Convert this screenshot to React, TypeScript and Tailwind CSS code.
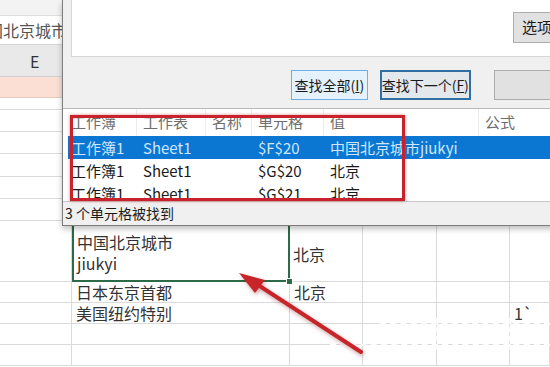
import React from 'react';

const cols = ['w-[72px]', 'w-[218px]', 'w-[73px]', 'w-[74px]', 'w-[73px]', 'flex-1'];

type Cells = (string | null)[];

const SheetRow: React.FC<{ h: string; cells?: Cells }> = ({ h, cells = [] }) => (
  <div className={`flex ${h} shrink-0`}>
    {cols.map((w, i) => (
      <div key={i} className={`${w} shrink-0 border-r border-b border-[#dadada] flex items-center pl-[4px] text-[16px] text-[#333] leading-[18px] overflow-hidden whitespace-nowrap`}>
        {cells[i]}
      </div>
    ))}
  </div>
);

const listCols = ['w-[69px] pl-[3px]', 'w-[69px] pl-[6px]', 'w-[46px] pl-[6px]', 'w-[72px] pl-[6px]', 'w-[155px] pl-[6px]', 'flex-1 pl-[6px]'];

const ListRow: React.FC<{ cells: string[]; selected?: boolean }> = ({ cells, selected }) => (
  <div className={`flex h-[23px] shrink-0 items-center text-[15px] leading-[20px] ${selected ? 'bg-[#0b77d3] text-[#cfe7fd]' : 'text-[#1a1a1a]'}`}>
    {cells.map((c, i) => (
      <div key={i} className={`${listCols[i]} shrink-0 whitespace-nowrap`}>{c}</div>
    ))}
  </div>
);

export default function App() {
  return (
    <div className="relative w-[550px] h-[367px] overflow-hidden bg-white font-['Noto_Sans_CJK_SC','Noto_Sans',sans-serif]">
      {/* worksheet behind the dialog */}
      <div className="flex flex-col">
        <div className="h-[16px] bg-[#f3f3f3] border-b border-[#dedede]" />
        <div className="h-[29px] flex items-center border-b border-[#d4d4d4] text-[16px] text-[#555] whitespace-nowrap overflow-hidden">
          <span className="ml-[-29px]">中国北京城市jiukyi</span>
        </div>
        <div className="h-[32px] bg-[#e9e9e9] border-b border-[#cfcfcf] flex items-center pl-[30px] text-[16px] text-[#333]">E</div>
        <div className="h-[21px] bg-[#fbdfd4] border-b border-[#e8c9bd]" />
        <SheetRow h="h-[12px]" />
        <SheetRow h="h-[22px]" />
        <SheetRow h="h-[22px]" />
        <SheetRow h="h-[23px]" />
        <SheetRow h="h-[22px]" />
        <SheetRow h="h-[22px]" />
        <div className="flex h-[61px] shrink-0">
          <div className="w-[72px] shrink-0 border-r border-b border-[#dadada]" />
          <div className="relative w-[218px] shrink-0 border-l-2 border-r-2 border-b-2 border-[#2b6b47] flex flex-col justify-center pl-[3px] text-[16px] text-[#333] leading-[21px] pt-[4px]">
            <span>中国北京城市</span>
            <span>jiukyi</span>
            <div className="absolute right-[-5px] bottom-[-5px] w-[7px] h-[7px] bg-[#2b6b47] border border-white" />
          </div>
          <div className="w-[73px] shrink-0 border-r border-b border-[#dadada] flex items-center pl-[3px] pt-[6px] text-[16px] text-[#333]">北京</div>
          <div className="w-[74px] shrink-0 border-r border-b border-[#dadada]" />
          <div className="w-[73px] shrink-0 border-r border-b border-[#dadada]" />
          <div className="flex-1 border-b border-[#dadada]" />
        </div>
        <SheetRow h="h-[21px]" cells={[null, '日本东京首都', '北京']} />
        <SheetRow h="h-[21px]" cells={[null, '美国纽约特别', null, null, null, '1`']} />
        <SheetRow h="h-[21px]" />
        <SheetRow h="h-[21px]" />
      </div>

      {/* watermark remnants */}
      <div className="absolute left-[380px] top-[323px] w-[170px] border-t-2 border-dashed border-white/90" />
      <div className="absolute left-[330px] top-[344px] w-[220px] border-t-2 border-dashed border-white/90" />
      <div className="absolute left-[436px] top-[318px] h-[32px] border-l-2 border-dashed border-white/80" />
      <div className="absolute left-[509px] top-[318px] h-[32px] border-l-2 border-dashed border-white/80" />

      {/* find dialog */}
      <div className="absolute left-[62px] top-0 w-[500px] h-[226px] bg-[#f0f0f0] border-l border-b border-[#7d7d7d] shadow-[0_3px_6px_rgba(0,0,0,0.25)] flex flex-col text-[14px] text-[#1a1a1a]">
        <div className="h-[57px] shrink-0 pl-[8px]">
          <div className="h-full bg-white border-l border-b border-[#d6d6d6] pl-[441px] pt-[12px]">
            <div className="w-[60px] h-[31px] bg-[#e1e1e1] border border-[#adadad] flex items-center pl-[8px] text-[15px]">选项</div>
          </div>
        </div>
        <div className="h-[51px] shrink-0 flex items-start pt-[13px] pl-[228px]">
          <div className="w-[90px] h-[30px] bg-[#e5f1fb] border border-[#6fb0e4] flex items-center justify-center whitespace-nowrap">
            <span>查找全部(<span className="underline">I</span>)</span>
          </div>
          <div className="ml-[12px] w-[106px] h-[30px] bg-[#e3e8ec] border-2 border-[#2f6fa3] flex items-center justify-center whitespace-nowrap">
            <span>查找下一个(<span className="underline">F</span>)</span>
          </div>
          <div className="ml-[23px] w-[80px] h-[30px] bg-[#e1e1e1] border border-[#adadad]" />
        </div>
        <div className="h-[93px] shrink-0 bg-white border-t border-[#b9b9b9] overflow-hidden flex flex-col pl-[5px]">
          <div className="flex h-[27px] shrink-0 items-center text-[15px] text-[#6e6e6e]">
            {['工作簿', '工作表', '名称', '单元格', '值', '公式'].map((c, i) => (
              <div key={i} className={`${listCols[i]} shrink-0 h-full flex items-center ${i < 5 ? 'border-r border-[#ececec]' : ''}`}>{c}</div>
            ))}
          </div>
          <ListRow selected cells={['工作簿1', 'Sheet1', '', '$F$20', '中国北京城市jiukyi', '']} />
          <ListRow cells={['工作簿1', 'Sheet1', '', '$G$20', '北京', '']} />
          <ListRow cells={['工作簿1', 'Sheet1', '', '$G$21', '北京', '']} />
        </div>
        <div className="flex-1 border-t border-[#c8c8c8] flex items-center pl-[2px] text-[14px]">3 个单元格被找到</div>
      </div>

      {/* red highlight box */}
      <div className="absolute left-[70px] top-[115px] w-[335px] h-[86px] border-[3px] border-[#c8232c] shadow-[0_0_3px_rgba(200,40,40,0.55)]" />

      {/* red arrow */}
      <svg className="absolute left-0 top-0 drop-shadow-[1px_2px_2px_rgba(120,0,0,0.35)]" width="550" height="367" viewBox="0 0 550 367">
        <line x1="361" y1="352" x2="255" y2="283" stroke="#c8252b" strokeWidth="4" strokeLinecap="round" />
        <polygon points="239,273 265,280 255,293" fill="#c8252b" />
      </svg>
    </div>
  );
}
